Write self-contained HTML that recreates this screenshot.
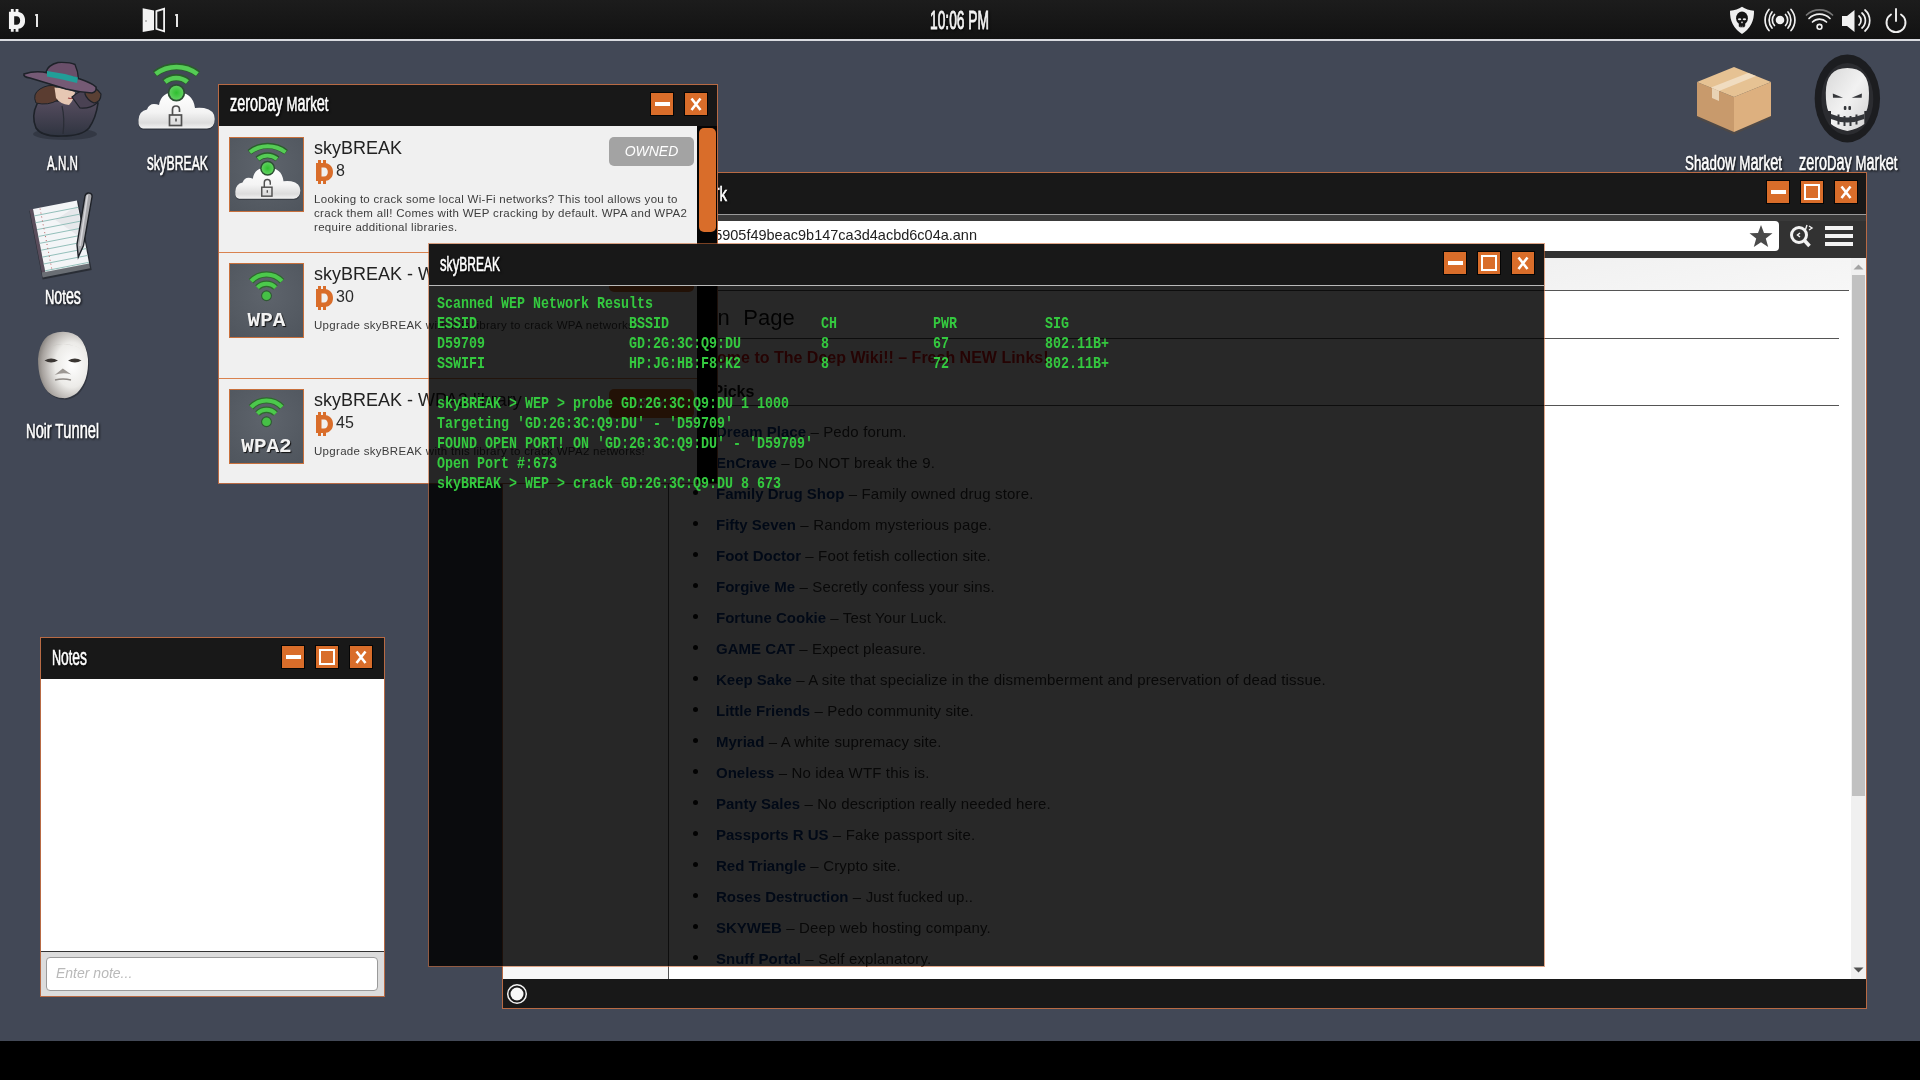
<!DOCTYPE html><html><head><meta charset="utf-8"><style>
*{margin:0;padding:0;box-sizing:border-box}
html,body{width:1920px;height:1080px;overflow:hidden;background:#424856;font-family:"Liberation Sans",sans-serif;-webkit-font-smoothing:antialiased}
#root{position:absolute;left:0;top:0;width:1920px;height:1080px;will-change:transform}
.a{position:absolute}
.btn{width:22px;height:22px;background:#d96d2a;box-shadow:0 0 0 1px #050505}
.tb{background:#181818}
.mono{font-family:"Liberation Mono",monospace}
</style></head><body><div id="root">
<div class="a" style="left:0;top:0;width:1920px;height:39px;background:linear-gradient(#1c1c1c,#121212)"></div>
<div class="a" style="left:0;top:39px;width:1920px;height:2px;background:#d9dbe0"></div>
<div class="a" style="left:0;top:1041px;width:1920px;height:39px;background:#000"></div>
<svg class="a" style="left:8px;top:9px" width="17.1" height="22.8" viewBox="0 0 18 24"><path fill="#f4f4f4" d="M3 0h3v3h2V0h3v3.2C15 3.8 18 6.8 18 12s-3 8.2-7 8.8V24H8v-3H6v3H3v-3H1V3h2z M6.5 7.5v9H9c2.5 0 3.8-1.8 3.8-4.5S11.5 7.5 9 7.5z" fill-rule="evenodd"/></svg>
<div class="a" style="left:35.5px;top:13.5px;width:2.6px;height:13.5px;background:#e6e6e6"></div><div class="a" style="left:34.5px;top:14px;width:1.2px;height:2px;background:#bbb"></div>
<svg class="a" style="left:142px;top:7px" width="25" height="26" viewBox="0 0 25 26"><path d="M0.7 1.3 L12 3.5 L12 23 L0.7 25 Z" fill="#f2f2f2"/><path d="M14.4 4.2 L22.1 1.8 L22.1 24.3 L14.4 21.8 Z" fill="none" stroke="#f2f2f2" stroke-width="1.8"/><circle cx="4" cy="14" r=".7" fill="#555"/></svg>
<div class="a" style="left:175.5px;top:13.5px;width:2.6px;height:13.5px;background:#e6e6e6"></div><div class="a" style="left:174.5px;top:14px;width:1.2px;height:2px;background:#bbb"></div>
<svg class="a" style="left:930px;top:2.60px;overflow:visible;filter:drop-shadow(1px 1px 1px rgba(0,0,0,.8));" width="59" height="35.2"><text x="0" y="26.40" textLength="59" lengthAdjust="spacingAndGlyphs" font-family="Liberation Sans" font-size="25.14" font-weight="normal" fill="#f4f4f4" stroke="#f4f4f4" stroke-width="0.9">10:06 PM</text></svg>
<svg class="a" style="left:1728px;top:5px" width="190" height="32" viewBox="0 0 190 32"><path d="M14 1.8 Q19 5.3 26 5.8 Q26.5 21 14 29 Q1.5 21 2 5.8 Q9 5.3 14 1.8 Z" fill="#f0f0f0"/><ellipse cx="14" cy="13.2" rx="5.9" ry="6.6" fill="#141414"/><rect x="10.8" y="17" width="6.4" height="5.2" rx="1.5" fill="#141414"/><ellipse cx="11.6" cy="14.2" rx="1.7" ry="1" fill="#e8e8e8"/><ellipse cx="16.4" cy="14.2" rx="1.7" ry="1" fill="#e8e8e8"/><rect x="13.2" y="16.6" width="1.6" height="1.6" fill="#d0d0d0"/><path d="M10.5 21.3 H17.5" stroke="#aaa" stroke-width=".6" stroke-dasharray="1 .8"/><circle cx="52" cy="15" r="4.3" fill="#f0f0f0"/><g fill="none" stroke="#f0f0f0" stroke-width="1.7" stroke-linecap="round"><path d="M46.5 9.5 A8 8 0 0 0 46.5 20.5"/><path d="M57.5 9.5 A8 8 0 0 1 57.5 20.5"/><path d="M44 7 A12.5 12.5 0 0 0 44 23"/><path d="M60 7 A12.5 12.5 0 0 1 60 23"/><path d="M41 4.5 A16 16 0 0 0 41 25.5"/><path d="M63 4.5 A16 16 0 0 1 63 25.5"/><path d="M78.5 10 A19 19 0 0 1 104.5 10" stroke="#777"/><path d="M81 13.5 A15 15 0 0 1 102 13.5"/><path d="M84.5 17 A10 10 0 0 1 98.5 17"/><circle cx="91.5" cy="21.8" r="2.4" stroke-width="1.6"/><path d="M131 11 A6 6 0 0 1 131 20"/><path d="M134 8 A10 10 0 0 1 134 23"/><path d="M137 5 A14 14 0 0 1 137 26"/><path d="M163 9.5 A9.5 9.5 0 1 0 173 9.5" stroke-width="1.9"/><path d="M168 4 V16" stroke-width="1.9"/></g><path d="M114 11 H119 L126.5 5 V27 L119 21 H114 Z" fill="#f0f0f0"/></svg>
<svg class="a" style="left:18px;top:56px" width="90" height="90" viewBox="0 0 90 90"><defs><linearGradient id="coat" x1="0" y1="0" x2="0" y2="1"><stop offset="0" stop-color="#5a4f62"/><stop offset="1" stop-color="#2f3440"/></linearGradient></defs><ellipse cx="47" cy="78" rx="32" ry="6" fill="#2a2f38" opacity=".6"/><path d="M19 48 Q13 60 18 72 Q24 81 44 80 Q64 80 71 72 Q78 62 80 47 Q74 40 62 40 Q50 42 40 45 Q26 42 19 48 Z" fill="url(#coat)" stroke="#1e2229" stroke-width="1.6"/><path d="M44 50 Q47 62 45 78" stroke="#2a2d36" stroke-width="1.2" fill="none"/><path d="M18 47 Q14 38 22 33 Q30 28 38 30 L40 44 Q30 50 18 47 Z" fill="#5b3d31" stroke="#1e2229" stroke-width="1"/><path d="M36.5 31.5 Q46 32 57 36 Q56 44 51 49 Q42 48 38 42 Z" fill="#e6c7b3"/><path d="M50 42 Q53 43 55 42" stroke="#a34a4a" stroke-width="1.2" fill="none"/><path d="M54 41 Q62 34 70 33 Q80 38 79 47 Q72 53 62 52 Z" fill="#4a4253" stroke="#1e2229" stroke-width="1.2"/><path d="M68 31 Q78 30 83 38 Q83 46 76 47 Q69 44 67 38 Z" fill="#5a4034" stroke="#1e2229" stroke-width="1.2"/><path d="M28 16 Q30 9 40 6.5 Q52 6 57 8.5 Q60 15 60.5 23 L32 21 Z" fill="#6a4f6a" stroke="#1e2229" stroke-width="1.4"/><path d="M6 18 Q18 14 30 17 Q50 20 62 23 Q74 27 78 31 Q79 36 74 37 Q60 36 48 33 Q32 28 12 22 Q5 21 6 18 Z" fill="#755a75" stroke="#1e2229" stroke-width="1.6"/><path d="M29 15 Q45 17 60 21.5 L59 27 Q44 23 29 20.5 Z" fill="#229e98"/></svg>
<svg class="a" style="left:47px;top:148.00px;overflow:visible;filter:drop-shadow(1px 1px 1px rgba(0,0,0,.8));" width="31" height="29.3"><text x="0" y="22.00" textLength="31" lengthAdjust="spacingAndGlyphs" font-family="Liberation Sans" font-size="20.95" font-weight="normal" fill="#fff" stroke="#fff" stroke-width="0.6">A.N.N</text></svg>
<svg class="a" style="left:137px;top:62px" width="80" height="68" viewBox="0 0 80 68"><defs><linearGradient id="cgc" x1="0" y1="0" x2="0" y2="1"><stop offset="0" stop-color="#ffffff"/><stop offset=".55" stop-color="#f4f4f4"/><stop offset=".85" stop-color="#dcdcdc"/><stop offset="1" stop-color="#f2f2f2"/></linearGradient><radialGradient id="dgc" cx=".5" cy=".5" r=".5"><stop offset="0" stop-color="#2fbf2f"/><stop offset="1" stop-color="#5fd05f"/></radialGradient></defs><path d="M6 66.4 Q1 66 1.5 58 Q2 49 10 47.5 Q12 42 17 42 Q20 42 22 43 Q24 30 39 30 Q56 30 58 46 Q62 45.5 67 46 Q77.7 48 77.7 57 Q77.7 66 70 66.4 Z" fill="#23272d" opacity=".5" transform="translate(0,1.6)"/><path d="M6 66.4 Q1 66 1.5 58 Q2 49 10 47.5 Q12 42 17 42 Q20 42 22 43 Q24 30 39 30 Q56 30 58 46 Q62 45.5 67 46 Q77.7 48 77.7 57 Q77.7 66 70 66.4 Z" fill="url(#cgc)"/><g fill="none" stroke-linecap="butt"><path d="M18 12 A34.6 34.6 0 0 1 61 12" stroke="#2a5e2c" stroke-width="7"/><path d="M18.6 12 A34.6 34.6 0 0 1 60.4 12" stroke="#55cc55" stroke-width="4.6"/><path d="M27.5 20 A17.6 17.6 0 0 1 51 20" stroke="#2a5e2c" stroke-width="7"/><path d="M28.1 20 A17.6 17.6 0 0 1 50.4 20" stroke="#55cc55" stroke-width="4.6"/></g><circle cx="39.4" cy="30.7" r="8.8" fill="#2d4f33"/><circle cx="39.4" cy="30.7" r="7" fill="url(#dgc)"/><path d="M35.5 53 V47.5 Q35.5 44 39 44 Q42.5 44 42.5 47.5 V50" fill="none" stroke="#505050" stroke-width="1.7"/><rect x="32.5" y="53" width="12" height="10.5" fill="none" stroke="#505050" stroke-width="1.7"/><rect x="38.2" y="56.5" width="1.6" height="3" fill="#505050"/></svg>
<svg class="a" style="left:147px;top:148.00px;overflow:visible;filter:drop-shadow(1px 1px 1px rgba(0,0,0,.8));" width="61" height="29.3"><text x="0" y="22.00" textLength="61" lengthAdjust="spacingAndGlyphs" font-family="Liberation Sans" font-size="20.95" font-weight="normal" fill="#fff" stroke="#fff" stroke-width="0.6"><tspan font-size="23.04">s</tspan>k<tspan font-size="23.04">y</tspan>BREAK</text></svg>
<svg class="a" style="left:25px;top:185px" width="80" height="95" viewBox="0 0 80 95"><g transform="translate(8,24) rotate(-11)"><rect x="-4" y="1" width="50" height="70" fill="#1f2228" opacity=".7"/><rect x="-3.5" y="0" width="3.5" height="68" fill="#5a4d5c"/><rect x="-3.5" y="64" width="48.2" height="5" fill="#6a6e74"/><rect x="0" y="0" width="44.7" height="64.3" fill="#f3f5f7"/><path d="M20 15 L44 5 L44 40 Z" fill="#e6e8eb"/><line x1="0" y1="7" x2="44.7" y2="7" stroke="#8fbdb8" stroke-width=".9"/><line x1="0" y1="14" x2="44.7" y2="14" stroke="#8fbdb8" stroke-width=".9"/><line x1="0" y1="21" x2="44.7" y2="21" stroke="#8fbdb8" stroke-width=".9"/><line x1="0" y1="28" x2="44.7" y2="28" stroke="#8fbdb8" stroke-width=".9"/><line x1="0" y1="35" x2="44.7" y2="35" stroke="#8fbdb8" stroke-width=".9"/><line x1="0" y1="42" x2="44.7" y2="42" stroke="#8fbdb8" stroke-width=".9"/><line x1="0" y1="49" x2="44.7" y2="49" stroke="#8fbdb8" stroke-width=".9"/><line x1="0" y1="56" x2="44.7" y2="56" stroke="#8fbdb8" stroke-width=".9"/><line x1="0" y1="63" x2="44.7" y2="63" stroke="#8fbdb8" stroke-width=".9"/><line x1="7" y1="1" x2="7" y2="63" stroke="#b85a5a" stroke-width=".9" stroke-dasharray="1 3"/></g><path d="M60 11 Q61 7.5 64 8 Q67.5 8.5 67 12 L58.5 60.5 L53.3 72 L52 59.5 Z" fill="#a9a9ad" stroke="#1e2127" stroke-width="1.4"/><path d="M62.5 10 L55 61" stroke="#d6d6da" stroke-width="1.6"/></svg>
<svg class="a" style="left:45px;top:282.00px;overflow:visible;filter:drop-shadow(1px 1px 1px rgba(0,0,0,.8));" width="36" height="29.3"><text x="0" y="22.00" textLength="36" lengthAdjust="spacingAndGlyphs" font-family="Liberation Sans" font-size="20.95" font-weight="normal" fill="#fff" stroke="#fff" stroke-width="0.6">N<tspan font-size="23.04">o</tspan>t<tspan font-size="23.04">e</tspan><tspan font-size="23.04">s</tspan></text></svg>
<svg class="a" style="left:35px;top:329px" width="56" height="72" viewBox="0 0 56 72"><defs><radialGradient id="mg" cx=".68" cy=".5" r=".75"><stop offset="0" stop-color="#ffffff"/><stop offset=".45" stop-color="#ecebe8"/><stop offset=".8" stop-color="#a8a39f"/><stop offset="1" stop-color="#6e6a66"/></radialGradient><linearGradient id="brow" x1="0" y1="0" x2="0" y2="1"><stop offset="0" stop-color="#fff" stop-opacity=".7"/><stop offset="1" stop-color="#fff" stop-opacity="0"/></linearGradient></defs><path d="M28 2.7 Q50 2.7 53 30 Q54 52 42 64 Q34 70 28 69 Q20 69 13 63 Q3 52 3 30 Q5 2.7 28 2.7 Z" fill="#1d2026" opacity=".45" transform="translate(1,1.5)"/><path d="M28 2.7 Q50 2.7 53 30 Q54 52 42 64 Q34 70 28 69 Q20 69 13 63 Q3 52 3 30 Q5 2.7 28 2.7 Z" fill="url(#mg)"/><path d="M10 20 Q28 10 46 20 Q40 16 28 15 Q16 16 10 20 Z" fill="#b8b3ae" opacity=".6"/><path d="M9.5 31.5 Q16 27.5 23 31.5 Q16 35.5 9.5 31.5 Z" fill="#3b3734"/><path d="M33 31.5 Q40 27.5 46.5 31.5 Q40 35.5 33 31.5 Z" fill="#3b3734"/><path d="M27.8 39.5 L36.3 45.5 Q28 43 19.6 46 Z" fill="#9c9793"/><path d="M20 51 Q28 49 36 51" stroke="#8d8884" stroke-width="1.3" fill="none"/></svg>
<svg class="a" style="left:26px;top:415.50px;overflow:visible;filter:drop-shadow(1px 1px 1px rgba(0,0,0,.8));" width="73" height="29.3"><text x="0" y="22.00" textLength="73" lengthAdjust="spacingAndGlyphs" font-family="Liberation Sans" font-size="20.95" font-weight="normal" fill="#fff" stroke="#fff" stroke-width="0.6">N<tspan font-size="23.04">o</tspan>i<tspan font-size="23.04">r</tspan> T<tspan font-size="23.04">u</tspan><tspan font-size="23.04">n</tspan><tspan font-size="23.04">n</tspan><tspan font-size="23.04">e</tspan>l</text></svg>
<svg class="a" style="left:1695px;top:65px" width="78" height="70" viewBox="0 0 78 70"><path d="M39 2 L76 17 L76 52 L39 68 L2 52 L2 17 Z" fill="#5a4a3a" opacity=".5" transform="translate(0,1.5)"/><path d="M2 17 L39 32 L39 67 L2 51 Z" fill="#c89a6c"/><path d="M39 32 L76 17 L76 51 L39 67 Z" fill="#ddb07f"/><path d="M2 17 L39 2 L76 17 L39 32 Z" fill="#e6c293"/><path d="M16 22.5 L53 8 L61 11 L24 26 Z" fill="#f0dcc0"/><path d="M17 23 L24 26 L24 36 L17 33 Z" fill="#e8d2b4"/></svg>
<svg class="a" style="left:1684.5px;top:148.00px;overflow:visible;filter:drop-shadow(1px 1px 1px rgba(0,0,0,.8));" width="97" height="29.3"><text x="0" y="22.00" textLength="97" lengthAdjust="spacingAndGlyphs" font-family="Liberation Sans" font-size="20.95" font-weight="normal" fill="#fff" stroke="#fff" stroke-width="0.6">Sh<tspan font-size="23.04">a</tspan>d<tspan font-size="23.04">o</tspan><tspan font-size="23.04">w</tspan> M<tspan font-size="23.04">a</tspan><tspan font-size="23.04">r</tspan>k<tspan font-size="23.04">e</tspan>t</text></svg>
<svg class="a" style="left:1812px;top:53px" width="72" height="92" viewBox="0 0 72 92"><defs><linearGradient id="sk" x1="0" y1="0" x2="1" y2="1"><stop offset="0" stop-color="#d8d8d8"/><stop offset=".5" stop-color="#f2f2f2"/><stop offset="1" stop-color="#d0d0d0"/></linearGradient></defs><ellipse cx="35.35" cy="45.45" rx="32.7" ry="44" fill="#1c1d20"/><ellipse cx="35.35" cy="46" rx="26" ry="36" fill="#2b2c30"/><path d="M35.35 14.9 Q57 14.9 57 40 Q57 52 54.5 58 L52.3 58 L52.3 71 Q46 76 35.35 78 Q24.7 76 19 71 L19 58 L16.2 58 Q13.8 52 13.8 40 Q13.8 14.9 35.35 14.9 Z" fill="url(#sk)"/><path d="M20.8 40.4 L31 44.8 L21 44.8 Z" fill="#34363a"/><path d="M49.9 40.4 L39.7 44.8 L49.7 44.8 Z" fill="#34363a"/><rect x="31.8" y="53" width="2.6" height="4" rx="1" fill="#34363a"/><rect x="36.4" y="53" width="2.6" height="4" rx="1" fill="#34363a"/><path d="M19 61 Q35 68 52.3 61 L52.3 66 Q35 73 19 66 Z" fill="#34363a"/><rect x="25.5" y="61.5" width="2" height="10" fill="#34363a"/><rect x="31.5" y="63" width="2" height="10" fill="#34363a"/><rect x="37.5" y="63" width="2" height="10" fill="#34363a"/><rect x="43.5" y="61.5" width="2" height="10" fill="#34363a"/></svg>
<svg class="a" style="left:1799px;top:148.00px;overflow:visible;filter:drop-shadow(1px 1px 1px rgba(0,0,0,.8));" width="98.5" height="29.3"><text x="0" y="22.00" textLength="98.5" lengthAdjust="spacingAndGlyphs" font-family="Liberation Sans" font-size="20.95" font-weight="normal" fill="#fff" stroke="#fff" stroke-width="0.6"><tspan font-size="23.04">z</tspan><tspan font-size="23.04">e</tspan><tspan font-size="23.04">r</tspan><tspan font-size="23.04">o</tspan>D<tspan font-size="23.04">a</tspan><tspan font-size="23.04">y</tspan> M<tspan font-size="23.04">a</tspan><tspan font-size="23.04">r</tspan>k<tspan font-size="23.04">e</tspan>t</text></svg>
<div class="a" style="left:502px;top:172px;width:1365px;height:837px;border:1px solid #b86a44;background:#181818;overflow:hidden">
</div>
<div class="a tb" style="left:503px;top:173px;width:1363px;height:41px"></div>
<svg class="a" style="left:669px;top:178.70px;overflow:visible;filter:drop-shadow(1px 1px 1px rgba(0,0,0,.8));" width="58" height="29.3"><text x="0" y="22.00" textLength="58" lengthAdjust="spacingAndGlyphs" font-family="Liberation Sans" font-size="20.95" font-weight="normal" fill="#fff" stroke="#fff" stroke-width="0.6">N<tspan font-size="23.04">e</tspan>t<tspan font-size="23.04">w</tspan><tspan font-size="23.04">o</tspan><tspan font-size="23.04">r</tspan>k</text></svg>
<div class="a btn" style="left:1767px;top:181px">
<div class="a" style="left:4px;top:9px;width:15px;height:4px;background:#fff"></div>
</div>
<div class="a btn" style="left:1801px;top:181px">
<div class="a" style="left:3px;top:3px;width:16px;height:16px;border:2.5px solid #fff"></div>
</div>
<div class="a btn" style="left:1835px;top:181px">
<svg class="a" style="left:0;top:0" width="22" height="22"><path d="M6.5 5.5 L15.5 17 M15.5 5.5 L6.5 17" stroke="#fff" stroke-width="2.6" fill="none"/></svg>
</div>
<div class="a" style="left:503px;top:214px;width:1363px;height:1px;background:#9a9a9a"></div>
<div class="a" style="left:503px;top:215px;width:1363px;height:43px;background:#323232"></div>
<div class="a" style="left:503px;top:215px;width:1363px;height:6px;background:#3a3a3a"></div>
<div class="a" style="left:560px;top:221px;width:1219px;height:30px;background:#fff;border-radius:4px"></div>
<div class="a" style="left:560px;top:225px;font-size:14.5px;color:#222;white-space:nowrap;width:417px;text-align:right;line-height:20px">7a5905f49beac9b147ca3d4acbd6c04a.ann</div>
<svg class="a" style="left:1748px;top:224px" width="26" height="24" viewBox="0 0 24 24"><path d="M12 1 L15 9 L23.5 9.3 L16.8 14.6 L19.2 23 L12 18.2 L4.8 23 L7.2 14.6 L0.5 9.3 L9 9 Z" fill="#4a4a4a"/></svg>
<svg class="a" style="left:1788px;top:223px" width="28" height="28" viewBox="0 0 28 28"><circle cx="11" cy="12" r="7.5" fill="none" stroke="#f2f2f2" stroke-width="3"/><path d="M16.5 17.5 L21.5 23" stroke="#f2f2f2" stroke-width="3.6" stroke-linecap="butt"/><path d="M12 10 L9.5 12 L12 14" stroke="#f2f2f2" stroke-width="1.5" fill="none"/><path d="M19 2 L17 8 M21 3 L24 5 L21 7" stroke="#f2f2f2" stroke-width="1.4" fill="none"/></svg>
<div class="a" style="left:1825px;top:226px;width:28px;height:4px;background:#f2f2f2"></div>
<div class="a" style="left:1825px;top:234px;width:28px;height:4px;background:#f2f2f2"></div>
<div class="a" style="left:1825px;top:242px;width:28px;height:4px;background:#f2f2f2"></div>
<div class="a" style="left:503px;top:258px;width:1363px;height:721px;background:#fff"></div>
<div class="a" style="left:503px;top:258px;width:1348px;height:32px;background:linear-gradient(170deg,#f2f2f2,#f8f8f8 40%,#f1f1f1 70%,#f7f7f7)"></div>
<div class="a" style="left:503px;top:290px;width:1346px;height:1px;background:#555"></div>
<div class="a" style="left:503px;top:291px;width:165px;height:688px;background:#f7f7f7"></div>
<div class="a" style="left:668px;top:484px;width:1px;height:495px;background:#555"></div>
<div class="a" style="left:678px;top:338px;width:1161px;height:1px;background:#555"></div>
<div class="a" style="left:678px;top:405px;width:1161px;height:1px;background:#555"></div>
<div class="a" style="left:682px;top:307px;font-size:22px;word-spacing:7.5px;color:#111;white-space:nowrap;line-height:22px">Main Page</div>
<div class="a" style="left:680px;top:348px;font-size:16px;font-weight:bold;color:#e81818;white-space:nowrap;line-height:20px">Welcome to The Deep Wiki!! &ndash; Fresh NEW Links!</div>
<div class="a" style="left:680px;top:384px;font-size:16px;font-weight:bold;color:#111;white-space:nowrap;line-height:16px">Top Picks</div>
<div class="a" style="left:693px;top:428px;width:5px;height:5px;border-radius:2.5px;background:#111"></div>
<div class="a pg" style="left:716px;top:423px;font-size:15px;color:#333;white-space:nowrap;line-height:18px"><b style="color:#0b3a8c">Dream Place</b><span style="letter-spacing:.15px"> &ndash; Pedo forum.</span></div>
<div class="a" style="left:693px;top:459px;width:5px;height:5px;border-radius:2.5px;background:#111"></div>
<div class="a pg" style="left:716px;top:454px;font-size:15px;color:#333;white-space:nowrap;line-height:18px"><b style="color:#0b3a8c">EnCrave</b><span style="letter-spacing:.15px"> &ndash; Do NOT break the 9.</span></div>
<div class="a" style="left:693px;top:490px;width:5px;height:5px;border-radius:2.5px;background:#111"></div>
<div class="a pg" style="left:716px;top:485px;font-size:15px;color:#333;white-space:nowrap;line-height:18px"><b style="color:#0b3a8c">Family Drug Shop</b><span style="letter-spacing:.15px"> &ndash; Family owned drug store.</span></div>
<div class="a" style="left:693px;top:521px;width:5px;height:5px;border-radius:2.5px;background:#111"></div>
<div class="a pg" style="left:716px;top:516px;font-size:15px;color:#333;white-space:nowrap;line-height:18px"><b style="color:#0b3a8c">Fifty Seven</b><span style="letter-spacing:.15px"> &ndash; Random mysterious page.</span></div>
<div class="a" style="left:693px;top:552px;width:5px;height:5px;border-radius:2.5px;background:#111"></div>
<div class="a pg" style="left:716px;top:547px;font-size:15px;color:#333;white-space:nowrap;line-height:18px"><b style="color:#0b3a8c">Foot Doctor</b><span style="letter-spacing:.15px"> &ndash; Foot fetish collection site.</span></div>
<div class="a" style="left:693px;top:583px;width:5px;height:5px;border-radius:2.5px;background:#111"></div>
<div class="a pg" style="left:716px;top:578px;font-size:15px;color:#333;white-space:nowrap;line-height:18px"><b style="color:#0b3a8c">Forgive Me</b><span style="letter-spacing:.15px"> &ndash; Secretly confess your sins.</span></div>
<div class="a" style="left:693px;top:614px;width:5px;height:5px;border-radius:2.5px;background:#111"></div>
<div class="a pg" style="left:716px;top:609px;font-size:15px;color:#333;white-space:nowrap;line-height:18px"><b style="color:#0b3a8c">Fortune Cookie</b><span style="letter-spacing:.15px"> &ndash; Test Your Luck.</span></div>
<div class="a" style="left:693px;top:645px;width:5px;height:5px;border-radius:2.5px;background:#111"></div>
<div class="a pg" style="left:716px;top:640px;font-size:15px;color:#333;white-space:nowrap;line-height:18px"><b style="color:#0b3a8c">GAME CAT</b><span style="letter-spacing:.15px"> &ndash; Expect pleasure.</span></div>
<div class="a" style="left:693px;top:676px;width:5px;height:5px;border-radius:2.5px;background:#111"></div>
<div class="a pg" style="left:716px;top:671px;font-size:15px;color:#333;white-space:nowrap;line-height:18px"><b style="color:#0b3a8c">Keep Sake</b><span style="letter-spacing:.15px"> &ndash; A site that specialize in the dismemberment and preservation of dead tissue.</span></div>
<div class="a" style="left:693px;top:707px;width:5px;height:5px;border-radius:2.5px;background:#111"></div>
<div class="a pg" style="left:716px;top:702px;font-size:15px;color:#333;white-space:nowrap;line-height:18px"><b style="color:#0b3a8c">Little Friends</b><span style="letter-spacing:.15px"> &ndash; Pedo community site.</span></div>
<div class="a" style="left:693px;top:738px;width:5px;height:5px;border-radius:2.5px;background:#111"></div>
<div class="a pg" style="left:716px;top:733px;font-size:15px;color:#333;white-space:nowrap;line-height:18px"><b style="color:#0b3a8c">Myriad</b><span style="letter-spacing:.15px"> &ndash; A white supremacy site.</span></div>
<div class="a" style="left:693px;top:769px;width:5px;height:5px;border-radius:2.5px;background:#111"></div>
<div class="a pg" style="left:716px;top:764px;font-size:15px;color:#333;white-space:nowrap;line-height:18px"><b style="color:#0b3a8c">Oneless</b><span style="letter-spacing:.15px"> &ndash; No idea WTF this is.</span></div>
<div class="a" style="left:693px;top:800px;width:5px;height:5px;border-radius:2.5px;background:#111"></div>
<div class="a pg" style="left:716px;top:795px;font-size:15px;color:#333;white-space:nowrap;line-height:18px"><b style="color:#0b3a8c">Panty Sales</b><span style="letter-spacing:.15px"> &ndash; No description really needed here.</span></div>
<div class="a" style="left:693px;top:831px;width:5px;height:5px;border-radius:2.5px;background:#111"></div>
<div class="a pg" style="left:716px;top:826px;font-size:15px;color:#333;white-space:nowrap;line-height:18px"><b style="color:#0b3a8c">Passports R US</b><span style="letter-spacing:.15px"> &ndash; Fake passport site.</span></div>
<div class="a" style="left:693px;top:862px;width:5px;height:5px;border-radius:2.5px;background:#111"></div>
<div class="a pg" style="left:716px;top:857px;font-size:15px;color:#333;white-space:nowrap;line-height:18px"><b style="color:#0b3a8c">Red Triangle</b><span style="letter-spacing:.15px"> &ndash; Crypto site.</span></div>
<div class="a" style="left:693px;top:893px;width:5px;height:5px;border-radius:2.5px;background:#111"></div>
<div class="a pg" style="left:716px;top:888px;font-size:15px;color:#333;white-space:nowrap;line-height:18px"><b style="color:#0b3a8c">Roses Destruction</b><span style="letter-spacing:.15px"> &ndash; Just fucked up..</span></div>
<div class="a" style="left:693px;top:924px;width:5px;height:5px;border-radius:2.5px;background:#111"></div>
<div class="a pg" style="left:716px;top:919px;font-size:15px;color:#333;white-space:nowrap;line-height:18px"><b style="color:#0b3a8c">SKYWEB</b><span style="letter-spacing:.15px"> &ndash; Deep web hosting company.</span></div>
<div class="a" style="left:693px;top:955px;width:5px;height:5px;border-radius:2.5px;background:#111"></div>
<div class="a pg" style="left:716px;top:950px;font-size:15px;color:#333;white-space:nowrap;line-height:18px"><b style="color:#0b3a8c">Snuff Portal</b><span style="letter-spacing:.15px"> &ndash; Self explanatory.</span></div>
<div class="a" style="left:1851px;top:258px;width:15px;height:721px;background:#f0f0f0"></div>
<svg class="a" style="left:1853px;top:263px" width="11" height="8"><path d="M0.5 6.5 L5.5 1.5 L10.5 6.5 Z" fill="#a3a3a3"/></svg>
<div class="a" style="left:1852px;top:275px;width:13px;height:521px;background:#c1c1c1"></div>
<svg class="a" style="left:1853px;top:966px" width="11" height="8"><path d="M0.5 1.5 L5.5 6.5 L10.5 1.5 Z" fill="#505050"/></svg>
<div class="a tb" style="left:503px;top:979px;width:1363px;height:29px"></div>
<svg class="a" style="left:506px;top:983px" width="22" height="22"><circle cx="11" cy="11" r="9.3" fill="none" stroke="#f4f4f4" stroke-width="1.5"/><circle cx="11" cy="11" r="6.5" fill="#f8f8f8"/></svg>
<div class="a" style="left:218px;top:84px;width:500px;height:400px;border:1px solid #b86a44;background:#f0f0f0"></div>
<div class="a tb" style="left:219px;top:85px;width:498px;height:41px"></div>
<svg class="a" style="left:230px;top:89.00px;overflow:visible;filter:drop-shadow(1px 1px 1px rgba(0,0,0,.8));" width="98.5" height="29.3"><text x="0" y="22.00" textLength="98.5" lengthAdjust="spacingAndGlyphs" font-family="Liberation Sans" font-size="20.95" font-weight="normal" fill="#fff" stroke="#fff" stroke-width="0.6"><tspan font-size="23.04">z</tspan><tspan font-size="23.04">e</tspan><tspan font-size="23.04">r</tspan><tspan font-size="23.04">o</tspan>D<tspan font-size="23.04">a</tspan><tspan font-size="23.04">y</tspan> M<tspan font-size="23.04">a</tspan><tspan font-size="23.04">r</tspan>k<tspan font-size="23.04">e</tspan>t</text></svg>
<div class="a btn" style="left:651px;top:93px">
<div class="a" style="left:4px;top:9px;width:15px;height:4px;background:#fff"></div>
</div>
<div class="a btn" style="left:685px;top:93px">
<svg class="a" style="left:0;top:0" width="22" height="22"><path d="M6.5 5.5 L15.5 17 M15.5 5.5 L6.5 17" stroke="#fff" stroke-width="2.6" fill="none"/></svg>
</div>
<div class="a" style="left:697px;top:126px;width:20px;height:357px;background:#050505"></div>
<div class="a" style="left:699px;top:128px;width:17px;height:104px;background:#d96d2a;border-radius:5px"></div>
<div class="a" style="left:229px;top:137px;width:75px;height:75px;border:1px solid #c8703c;background:radial-gradient(circle at 50% 40%,#5e646c,#4f555d)"></div>
<svg class="a" style="left:234.4px;top:141.6px" width="68.3" height="58" viewBox="0 0 80 68"><defs><linearGradient id="cgm" x1="0" y1="0" x2="0" y2="1"><stop offset="0" stop-color="#ffffff"/><stop offset=".55" stop-color="#f4f4f4"/><stop offset=".85" stop-color="#dcdcdc"/><stop offset="1" stop-color="#f2f2f2"/></linearGradient><radialGradient id="dgm" cx=".5" cy=".5" r=".5"><stop offset="0" stop-color="#2fbf2f"/><stop offset="1" stop-color="#5fd05f"/></radialGradient></defs><path d="M6 66.4 Q1 66 1.5 58 Q2 49 10 47.5 Q12 42 17 42 Q20 42 22 43 Q24 30 39 30 Q56 30 58 46 Q62 45.5 67 46 Q77.7 48 77.7 57 Q77.7 66 70 66.4 Z" fill="#23272d" opacity=".5" transform="translate(0,1.6)"/><path d="M6 66.4 Q1 66 1.5 58 Q2 49 10 47.5 Q12 42 17 42 Q20 42 22 43 Q24 30 39 30 Q56 30 58 46 Q62 45.5 67 46 Q77.7 48 77.7 57 Q77.7 66 70 66.4 Z" fill="url(#cgm)"/><g fill="none" stroke-linecap="butt"><path d="M18 12 A34.6 34.6 0 0 1 61 12" stroke="#2a5e2c" stroke-width="7"/><path d="M18.6 12 A34.6 34.6 0 0 1 60.4 12" stroke="#55cc55" stroke-width="4.6"/><path d="M27.5 20 A17.6 17.6 0 0 1 51 20" stroke="#2a5e2c" stroke-width="7"/><path d="M28.1 20 A17.6 17.6 0 0 1 50.4 20" stroke="#55cc55" stroke-width="4.6"/></g><circle cx="39.4" cy="30.7" r="8.8" fill="#2d4f33"/><circle cx="39.4" cy="30.7" r="7" fill="url(#dgm)"/><path d="M35.5 53 V47.5 Q35.5 44 39 44 Q42.5 44 42.5 47.5 V50" fill="none" stroke="#505050" stroke-width="1.7"/><rect x="32.5" y="53" width="12" height="10.5" fill="none" stroke="#505050" stroke-width="1.7"/><rect x="38.2" y="56.5" width="1.6" height="3" fill="#505050"/></svg>
<div class="a" style="left:314px;top:137px;font-size:18px;color:#222;white-space:nowrap;line-height:22px">skyBREAK</div>
<svg class="a" style="left:315px;top:160px" width="18.0" height="24.0" viewBox="0 0 18 24"><path fill="#d96d2a" d="M3 0h3v3h2V0h3v3.2C15 3.8 18 6.8 18 12s-3 8.2-7 8.8V24H8v-3H6v3H3v-3H1V3h2z M6.5 7.5v9H9c2.5 0 3.8-1.8 3.8-4.5S11.5 7.5 9 7.5z" fill-rule="evenodd"/></svg>
<div class="a" style="left:336px;top:163px;font-size:16px;color:#2a2a2a;line-height:16px">8</div>
<div class="a" style="left:314px;top:192px;font-size:11.5px;letter-spacing:0.3px;color:#3c3c3c;white-space:nowrap;line-height:14px">Looking to crack some local Wi-Fi networks? This tool allows you to</div>
<div class="a" style="left:314px;top:206px;font-size:11.5px;letter-spacing:0.3px;color:#3c3c3c;white-space:nowrap;line-height:14px">crack them all! Comes with WEP cracking by default. WPA and WPA2</div>
<div class="a" style="left:314px;top:220px;font-size:11.5px;letter-spacing:0.3px;color:#3c3c3c;white-space:nowrap;line-height:14px">require additional libraries.</div>
<div class="a" style="left:609px;top:137px;width:85px;height:29px;background:#a3a3a3;border-radius:5px;color:#fff;font-style:italic;font-size:14px;line-height:29px;text-align:center">OWNED</div>
<div class="a" style="left:219px;top:252px;width:478px;height:1px;background:#d9824f"></div>
<div class="a" style="left:229px;top:263px;width:75px;height:75px;border:1px solid #c8703c;background:radial-gradient(circle at 50% 40%,#5e646c,#4f555d)"></div>
<svg class="a" style="left:242px;top:270px" width="49" height="37" viewBox="0 0 54 40"><g fill="none"><path d="M10 12 A23 23 0 0 1 44 12" stroke="#2d6a2d" stroke-width="7"/><path d="M10 12 A23 23 0 0 1 44 12" stroke="#4cc94c" stroke-width="4.5"/><path d="M17 19 A14 14 0 0 1 37 19" stroke="#2d6a2d" stroke-width="7"/><path d="M17 19 A14 14 0 0 1 37 19" stroke="#4cc94c" stroke-width="4.5"/></g><circle cx="27" cy="28" r="6" fill="#2f5a34"/><circle cx="27" cy="28" r="4.8" fill="#46c046"/></svg>
<div class="a" style="left:229px;top:309px;width:75px;text-align:center;font-family:'Liberation Mono',monospace;font-weight:bold;font-size:21px;color:#f2f2f2;line-height:24px;text-shadow:1px 1px 1px #111">WPA</div>
<div class="a" style="left:314px;top:263px;font-size:18px;color:#222;white-space:nowrap;line-height:22px">skyBREAK - WPA library</div>
<svg class="a" style="left:315px;top:286px" width="18.0" height="24.0" viewBox="0 0 18 24"><path fill="#d96d2a" d="M3 0h3v3h2V0h3v3.2C15 3.8 18 6.8 18 12s-3 8.2-7 8.8V24H8v-3H6v3H3v-3H1V3h2z M6.5 7.5v9H9c2.5 0 3.8-1.8 3.8-4.5S11.5 7.5 9 7.5z" fill-rule="evenodd"/></svg>
<div class="a" style="left:336px;top:289px;font-size:16px;color:#2a2a2a;line-height:16px">30</div>
<div class="a" style="left:314px;top:318px;font-size:11.5px;letter-spacing:0.3px;color:#3c3c3c;white-space:nowrap;line-height:14px">Upgrade skyBREAK with this library to crack WPA networks.</div>
<div class="a" style="left:609px;top:263px;width:85px;height:29px;background:#d96d2a;border-radius:5px;color:#fff;font-style:italic;font-size:14px;line-height:29px;text-align:center">BUY</div>
<div class="a" style="left:219px;top:378px;width:478px;height:1px;background:#d9824f"></div>
<div class="a" style="left:229px;top:389px;width:75px;height:75px;border:1px solid #c8703c;background:radial-gradient(circle at 50% 40%,#5e646c,#4f555d)"></div>
<svg class="a" style="left:242px;top:396px" width="49" height="37" viewBox="0 0 54 40"><g fill="none"><path d="M10 12 A23 23 0 0 1 44 12" stroke="#2d6a2d" stroke-width="7"/><path d="M10 12 A23 23 0 0 1 44 12" stroke="#4cc94c" stroke-width="4.5"/><path d="M17 19 A14 14 0 0 1 37 19" stroke="#2d6a2d" stroke-width="7"/><path d="M17 19 A14 14 0 0 1 37 19" stroke="#4cc94c" stroke-width="4.5"/></g><circle cx="27" cy="28" r="6" fill="#2f5a34"/><circle cx="27" cy="28" r="4.8" fill="#46c046"/></svg>
<div class="a" style="left:229px;top:435px;width:75px;text-align:center;font-family:'Liberation Mono',monospace;font-weight:bold;font-size:21px;color:#f2f2f2;line-height:24px;text-shadow:1px 1px 1px #111">WPA2</div>
<div class="a" style="left:314px;top:389px;font-size:18px;color:#222;white-space:nowrap;line-height:22px">skyBREAK - WPA2 library</div>
<svg class="a" style="left:315px;top:412px" width="18.0" height="24.0" viewBox="0 0 18 24"><path fill="#d96d2a" d="M3 0h3v3h2V0h3v3.2C15 3.8 18 6.8 18 12s-3 8.2-7 8.8V24H8v-3H6v3H3v-3H1V3h2z M6.5 7.5v9H9c2.5 0 3.8-1.8 3.8-4.5S11.5 7.5 9 7.5z" fill-rule="evenodd"/></svg>
<div class="a" style="left:336px;top:415px;font-size:16px;color:#2a2a2a;line-height:16px">45</div>
<div class="a" style="left:314px;top:444px;font-size:11.5px;letter-spacing:0.3px;color:#3c3c3c;white-space:nowrap;line-height:14px">Upgrade skyBREAK with this library to crack WPA2 networks!</div>
<div class="a" style="left:609px;top:389px;width:85px;height:29px;background:#d96d2a;border-radius:5px;color:#fff;font-style:italic;font-size:14px;line-height:29px;text-align:center">BUY</div>
<div class="a" style="left:40px;top:637px;width:345px;height:360px;border:1px solid #b86a44;background:#fff"></div>
<div class="a tb" style="left:41px;top:638px;width:343px;height:41px"></div>
<svg class="a" style="left:52px;top:641.54px;overflow:visible;filter:drop-shadow(1px 1px 1px rgba(0,0,0,.8));" width="35" height="31.3"><text x="0" y="23.46" textLength="35" lengthAdjust="spacingAndGlyphs" font-family="Liberation Sans" font-size="22.35" font-weight="normal" fill="#fff" stroke="#fff" stroke-width="0.6">N<tspan font-size="24.58">o</tspan>t<tspan font-size="24.58">e</tspan><tspan font-size="24.58">s</tspan></text></svg>
<div class="a btn" style="left:282px;top:646px">
<div class="a" style="left:4px;top:9px;width:15px;height:4px;background:#fff"></div>
</div>
<div class="a btn" style="left:316px;top:646px">
<div class="a" style="left:3px;top:3px;width:16px;height:16px;border:2.5px solid #fff"></div>
</div>
<div class="a btn" style="left:350px;top:646px">
<svg class="a" style="left:0;top:0" width="22" height="22"><path d="M6.5 5.5 L15.5 17 M15.5 5.5 L6.5 17" stroke="#fff" stroke-width="2.6" fill="none"/></svg>
</div>
<div class="a" style="left:41px;top:951px;width:343px;height:1px;background:#333"></div>
<div class="a" style="left:41px;top:952px;width:343px;height:44px;background:#dcdcdc"></div>
<div class="a" style="left:46px;top:957px;width:332px;height:34px;background:#fff;border:1px solid #9a9a9a;border-radius:4px"></div>
<div class="a" style="left:56px;top:965px;font-size:14px;font-style:italic;color:#b9b9b9;line-height:16px">Enter note...</div>
<div class="a" style="left:428px;top:243px;width:1117px;height:724px;border:1px solid rgba(200,105,55,.6)"></div>
<div class="a tb" style="left:429px;top:244px;width:1115px;height:41px"></div>
<svg class="a" style="left:440px;top:249.74px;overflow:visible;filter:drop-shadow(1px 1px 1px rgba(0,0,0,.8));" width="60" height="28.4"><text x="0" y="21.26" textLength="60" lengthAdjust="spacingAndGlyphs" font-family="Liberation Sans" font-size="20.25" font-weight="normal" fill="#fff" stroke="#fff" stroke-width="0.6"><tspan font-size="22.28">s</tspan>k<tspan font-size="22.28">y</tspan>BREAK</text></svg>
<div class="a btn" style="left:1444px;top:252px">
<div class="a" style="left:4px;top:9px;width:15px;height:4px;background:#fff"></div>
</div>
<div class="a btn" style="left:1478px;top:252px">
<div class="a" style="left:3px;top:3px;width:16px;height:16px;border:2.5px solid #fff"></div>
</div>
<div class="a btn" style="left:1512px;top:252px">
<svg class="a" style="left:0;top:0" width="22" height="22"><path d="M6.5 5.5 L15.5 17 M15.5 5.5 L6.5 17" stroke="#fff" stroke-width="2.6" fill="none"/></svg>
</div>
<div class="a" style="left:429px;top:285px;width:1115px;height:1px;background:#b9b9b9"></div>
<div class="a" style="left:429px;top:286px;width:1115px;height:680px;background:rgba(0,0,0,.843)"></div>
<div class="a mono" style="left:437px;top:292px;font-size:13.33px;font-weight:bold;color:#34c93f;white-space:pre;line-height:20px;transform:scaleY(1.2);transform-origin:0 0">Scanned WEP Network Results</div>
<div class="a mono" style="left:437px;top:312px;font-size:13.33px;font-weight:bold;color:#34c93f;white-space:pre;line-height:20px;transform:scaleY(1.2);transform-origin:0 0">ESSID</div>
<div class="a mono" style="left:629px;top:312px;font-size:13.33px;font-weight:bold;color:#34c93f;white-space:pre;line-height:20px;transform:scaleY(1.2);transform-origin:0 0">BSSID</div>
<div class="a mono" style="left:821px;top:312px;font-size:13.33px;font-weight:bold;color:#34c93f;white-space:pre;line-height:20px;transform:scaleY(1.2);transform-origin:0 0">CH</div>
<div class="a mono" style="left:933px;top:312px;font-size:13.33px;font-weight:bold;color:#34c93f;white-space:pre;line-height:20px;transform:scaleY(1.2);transform-origin:0 0">PWR</div>
<div class="a mono" style="left:1045px;top:312px;font-size:13.33px;font-weight:bold;color:#34c93f;white-space:pre;line-height:20px;transform:scaleY(1.2);transform-origin:0 0">SIG</div>
<div class="a mono" style="left:437px;top:332px;font-size:13.33px;font-weight:bold;color:#34c93f;white-space:pre;line-height:20px;transform:scaleY(1.2);transform-origin:0 0">D59709</div>
<div class="a mono" style="left:629px;top:332px;font-size:13.33px;font-weight:bold;color:#34c93f;white-space:pre;line-height:20px;transform:scaleY(1.2);transform-origin:0 0">GD:2G:3C:Q9:DU</div>
<div class="a mono" style="left:821px;top:332px;font-size:13.33px;font-weight:bold;color:#34c93f;white-space:pre;line-height:20px;transform:scaleY(1.2);transform-origin:0 0">8</div>
<div class="a mono" style="left:933px;top:332px;font-size:13.33px;font-weight:bold;color:#34c93f;white-space:pre;line-height:20px;transform:scaleY(1.2);transform-origin:0 0">67</div>
<div class="a mono" style="left:1045px;top:332px;font-size:13.33px;font-weight:bold;color:#34c93f;white-space:pre;line-height:20px;transform:scaleY(1.2);transform-origin:0 0">802.11B+</div>
<div class="a mono" style="left:437px;top:352px;font-size:13.33px;font-weight:bold;color:#34c93f;white-space:pre;line-height:20px;transform:scaleY(1.2);transform-origin:0 0">SSWIFI</div>
<div class="a mono" style="left:629px;top:352px;font-size:13.33px;font-weight:bold;color:#34c93f;white-space:pre;line-height:20px;transform:scaleY(1.2);transform-origin:0 0">HP:JG:HB:F8:K2</div>
<div class="a mono" style="left:821px;top:352px;font-size:13.33px;font-weight:bold;color:#34c93f;white-space:pre;line-height:20px;transform:scaleY(1.2);transform-origin:0 0">8</div>
<div class="a mono" style="left:933px;top:352px;font-size:13.33px;font-weight:bold;color:#34c93f;white-space:pre;line-height:20px;transform:scaleY(1.2);transform-origin:0 0">72</div>
<div class="a mono" style="left:1045px;top:352px;font-size:13.33px;font-weight:bold;color:#34c93f;white-space:pre;line-height:20px;transform:scaleY(1.2);transform-origin:0 0">802.11B+</div>
<div class="a mono" style="left:437px;top:392px;font-size:13.33px;font-weight:bold;color:#34c93f;white-space:pre;line-height:20px;transform:scaleY(1.2);transform-origin:0 0">skyBREAK &gt; WEP &gt; probe GD:2G:3C:Q9:DU 1 1000</div>
<div class="a mono" style="left:437px;top:412px;font-size:13.33px;font-weight:bold;color:#34c93f;white-space:pre;line-height:20px;transform:scaleY(1.2);transform-origin:0 0">Targeting 'GD:2G:3C:Q9:DU' - 'D59709'</div>
<div class="a mono" style="left:437px;top:432px;font-size:13.33px;font-weight:bold;color:#34c93f;white-space:pre;line-height:20px;transform:scaleY(1.2);transform-origin:0 0">FOUND OPEN PORT! ON 'GD:2G:3C:Q9:DU' - 'D59709'</div>
<div class="a mono" style="left:437px;top:452px;font-size:13.33px;font-weight:bold;color:#34c93f;white-space:pre;line-height:20px;transform:scaleY(1.2);transform-origin:0 0">Open Port #:673</div>
<div class="a mono" style="left:437px;top:472px;font-size:13.33px;font-weight:bold;color:#34c93f;white-space:pre;line-height:20px;transform:scaleY(1.2);transform-origin:0 0">skyBREAK &gt; WEP &gt; crack GD:2G:3C:Q9:DU 8 673</div>
</div></body></html>
